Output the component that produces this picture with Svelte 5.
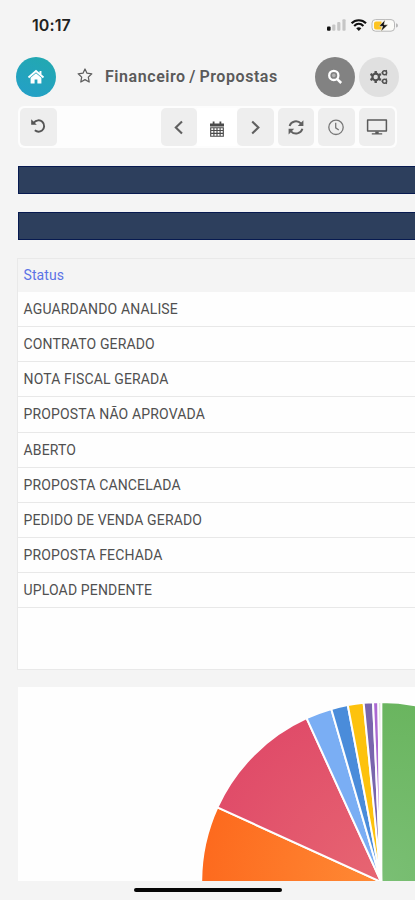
<script lang="ts">
  const statuses = [
    "AGUARDANDO ANALISE",
    "CONTRATO GERADO",
    "NOTA FISCAL GERADA",
    "PROPOSTA NÃO APROVADA",
    "ABERTO",
    "PROPOSTA CANCELADA",
    "PEDIDO DE VENDA GERADO",
    "PROPOSTA FECHADA",
    "UPLOAD PENDENTE",
  ];

  // angles in degrees, clockwise from the top of the pie
  const slices = [
    { from: 0, to: 120, fill: "url(#green)" },
    { from: -120, to: -65.5, fill: "url(#orange)" },
    { from: -65.5, to: -24.5, fill: "url(#red)" },
    { from: -24.5, to: -16.1, fill: "#7aaef4" },
    { from: -16.1, to: -10.7, fill: "#4a8cda" },
    { from: -10.7, to: -5.6, fill: "#fdc20d" },
    { from: -5.6, to: -2.6, fill: "#7965ad" },
    { from: -2.6, to: -0.9, fill: "#ab68d2" },
    { from: -0.9, to: 0, fill: "#cbd3c6" },
  ];

  const cx = 363.2;
  const cy = 195;
  const radius = 180;

  function point(angle: number) {
    const rad = (angle * Math.PI) / 180;
    return `${cx + radius * Math.sin(rad)} ${cy - radius * Math.cos(rad)}`;
  }

  function slicePath(from: number, to: number) {
    return `M${cx} ${cy} L${point(from)} A${radius} ${radius} 0 0 1 ${point(to)} Z`;
  }
</script>

<div class="screen">
  <div class="status-bar">
    <span class="time">10:17</span>
    <svg class="signals" width="72" height="16" viewBox="0 0 72 16">
      <rect x="1" y="9.5" width="3.6" height="4.2" rx="1" fill="#111" />
      <g fill="#c6c6c6">
        <rect x="6.2" y="7.4" width="3.2" height="6.3" rx="1" />
        <rect x="11.2" y="5" width="3.2" height="8.7" rx="1" />
        <rect x="16.4" y="2.2" width="3.2" height="11.5" rx="1" />
      </g>
      <g fill="none" stroke="#111" stroke-width="2.1">
        <path d="M25.6 6.3C29.4 2.2 36.2 2.2 40 6.3" />
        <path d="M28.2 9C31 6.2 34.6 6.2 37.4 9" />
      </g>
      <path d="M30.2 11.3q2.6-2 5.2 0L32.8 14z" fill="#111" />
      <rect x="46" y="2.6" width="22.5" height="11.6" rx="3.5" fill="#fbfbf8" stroke="#b7b7b7" />
      <path d="M50 4.4h5.5v8H50a2 2 0 0 1-2-2v-4a2 2 0 0 1 2-2z" fill="#fdc421" />
      <path d="M70 6.2q2 .5 2 2.2t-2 2.2z" fill="#b7b7b7" />
      <path d="M59.2 2.8 53 9.3h3.7l-1.8 5.2L62 7.8h-4z" fill="#111" stroke="#fff8e0" stroke-width=".5" />
    </svg>
  </div>

  <header>
    <button class="round home" aria-label="Home">
      <svg width="18" height="16" viewBox="0 0 18 16">
        <path d="M1.5 8.5 9 2l7.5 6.5M13.5 2v3.5" fill="none" stroke="#fff" stroke-width="1.9" />
        <path d="M3.6 8.8 9 4.3l5.4 4.5v5.7h-4v-4H7.6v4h-4z" fill="#fff" />
      </svg>
    </button>
    <svg class="star" width="16" height="16" viewBox="0 0 16 16">
      <path d="m8 1 2 4.2 4.8.6-3.5 3.3.9 4.9L8 11.6 3.8 14l.9-4.9-3.5-3.3L6 5.2z" fill="none" stroke="#5d5d5d" stroke-width="1.25" stroke-linejoin="round" />
    </svg>
    <h1>Financeiro / Propostas</h1>
    <button class="round search" aria-label="Buscar">
      <svg width="16" height="16" viewBox="0 0 16 16">
        <circle cx="6.8" cy="6.4" r="4.6" fill="none" stroke="#fff" stroke-width="2.3" />
        <circle cx="6.8" cy="6.4" r="1.8" fill="#b4b4b4" />
        <path d="m10 9.8 4.2 4.2" stroke="#fff" stroke-width="2.5" />
      </svg>
    </button>
    <button class="round settings" aria-label="Configurações">
      <svg width="20" height="16" viewBox="0 0 20 16">
        <g fill="none" stroke="#505050">
          <circle cx="6.7" cy="8" r="3.3" stroke-width="2.2" />
          <path d="M6.7 4.2V2M6.7 11.8V14M10 6.1 11.9 5M3.4 9.9 1.5 11M10 9.9l1.9 1.1M3.4 6.1 1.5 5" stroke-width="2.4" />
          <circle cx="15.6" cy="3.8" r="2" stroke-width="1.5" />
          <circle cx="15.6" cy="12.2" r="2" stroke-width="1.5" />
          <path d="M12.4 3.8H14M12.4 12.2H14M16.9 2.2l.8-1M16.9 5.4l.8 1M16.9 10.6l.8-1M16.9 13.8l.8 1" stroke-width="1.2" />
        </g>
      </svg>
    </button>
  </header>

  <div class="toolbar">
    <button class="tool undo" aria-label="Desfazer">
      <svg width="18" height="18" viewBox="0 0 18 18">
        <path d="M4.6 5.8C7.2 2.8 11 2.6 13.3 4.8 16 7.4 15.6 11.4 13 13.4 10.8 15 8 14.9 5.8 13.3" fill="none" stroke="#555" stroke-width="1.9" />
        <path d="M2.2 2.2v5.6h5.6z" fill="#555" />
      </svg>
    </button>
    <div class="period">
      <button class="tool" aria-label="Anterior">
        <svg width="16" height="18" viewBox="0 0 16 18"><path d="m11 3.5-6.2 6 6.2 6" fill="none" stroke="#606060" stroke-width="2.1" /></svg>
      </button>
      <button class="tool calendar" aria-label="Calendário">
        <svg width="16" height="18" viewBox="0 0 16 18">
          <path d="M1 3.6h14v3H1zM3.7 1.5h1.8v3H3.7zM10.5 1.5h1.8v3h-1.8z" fill="#4b4b4b" />
          <path d="M1.7 7.7h12.6v8.5H1.7zM1.7 10.5h12.6M1.7 13.4h12.6M4.9 7.7v8.5M8 7.7v8.5M11.1 7.7v8.5" fill="none" stroke="#4b4b4b" stroke-width="1.15" />
        </svg>
      </button>
      <button class="tool" aria-label="Próximo">
        <svg width="16" height="18" viewBox="0 0 16 18"><path d="m5.2 3.5 6.2 6-6.2 6" fill="none" stroke="#606060" stroke-width="2.1" /></svg>
      </button>
    </div>
    <button class="tool" aria-label="Atualizar">
      <svg width="18" height="18" viewBox="0 0 18 18">
        <path d="M2.6 8C4 3 10.5 1.7 14 5.5M15.4 10.8C14 15.8 7.5 17.1 4 13.3" fill="none" stroke="#606060" stroke-width="1.9" />
        <path d="M16.4 2.2V8h-5.6zM1.6 16.6v-5.8h5.6z" fill="#606060" />
      </svg>
    </button>
    <button class="tool" aria-label="Histórico">
      <svg width="18" height="18" viewBox="0 0 18 18" fill="none" stroke="#777">
        <circle cx="9" cy="9.3" r="7.2" stroke-width="1.3" />
        <path d="M8.7 4.8v5l3.1 2.2" stroke-width="1.3" />
      </svg>
    </button>
    <button class="tool" aria-label="Tela cheia">
      <svg width="22" height="18" viewBox="0 0 22 18">
        <path d="M1.6 2h18.8v11H1.6z" fill="none" stroke="#5a5a5a" stroke-width="1.5" stroke-linejoin="round" />
        <path d="M9.3 13.5h3.4v1.8h3.5v1.2H5.8v-1.2h3.5z" fill="#5a5a5a" />
      </svg>
    </button>
  </div>

  <div class="banner"></div>
  <div class="banner"></div>

  <section class="list">
    <div class="list-head">Status</div>
    {#each statuses as status}
      <div class="row">{status}</div>
    {/each}
  </section>

  <section class="chart">
    <svg width="397" height="194" viewBox="0 0 397 194">
      <defs>
        <radialGradient id="green" gradientUnits="userSpaceOnUse" {cx} {cy} r={radius}>
          <stop offset="0" stop-color="#7abf74" />
          <stop offset="1" stop-color="#6ab55f" />
        </radialGradient>
        <radialGradient id="orange" gradientUnits="userSpaceOnUse" {cx} {cy} r={radius}>
          <stop offset="0" stop-color="#ff8a35" />
          <stop offset="1" stop-color="#fd6a1e" />
        </radialGradient>
        <radialGradient id="red" gradientUnits="userSpaceOnUse" {cx} {cy} r={radius}>
          <stop offset="0" stop-color="#e76672" />
          <stop offset="1" stop-color="#e04c69" />
        </radialGradient>
      </defs>
      {#each slices as slice}
        <path class="slice" d={slicePath(slice.from, slice.to)} fill={slice.fill} />
      {/each}
    </svg>
  </section>

  <div class="home-indicator"></div>
</div>

<style>
  :global(body) {
    margin: 0;
    background: #f4f4f4;
  }

  .screen {
    box-sizing: border-box;
    width: 415px;
    height: 900px;
    overflow: hidden;
    display: flex;
    flex-direction: column;
    background: #f4f4f4;
    font-family: Roboto, "Liberation Sans", sans-serif;
  }

  .status-bar {
    height: 56px;
    flex: none;
    box-sizing: border-box;
    padding: 16px 17px 0 32px;
    display: flex;
    justify-content: space-between;
    align-items: flex-start;
  }

  .time {
    font-family: Inter, sans-serif;
    font-size: 16px;
    line-height: 18px;
    font-weight: 600;
    letter-spacing: 0.1px;
    color: #222;
  }

  .signals {
    margin-top: 1px;
  }

  header {
    height: 41px;
    flex: none;
    display: flex;
    align-items: center;
    padding: 0 16px;
  }

  button {
    border: none;
    padding: 0;
    display: flex;
    align-items: center;
    justify-content: center;
    flex: none;
  }

  .round {
    width: 40px;
    height: 40px;
    border-radius: 50%;
  }

  .home {
    background: linear-gradient(25deg, #249fc9, #22a9ae);
  }

  .star {
    margin: 0 12.5px 2px 20.5px;
  }

  h1 {
    flex: 1;
    margin: 0;
    font-size: 16px;
    line-height: 19px;
    font-weight: 600;
    letter-spacing: 0.56px;
    word-spacing: -1px;
    color: #5a5a5a;
    white-space: nowrap;
  }

  .search {
    background: #828282;
    margin-right: 4px;
  }

  .settings {
    background: #e0e0e0;
  }

  .toolbar {
    box-sizing: border-box;
    width: 379px;
    height: 42px;
    flex: none;
    margin: 9px 0 18px 18px;
    padding: 2px;
    display: flex;
    gap: 4px;
    border-radius: 6px;
    background: #fdfdfd;
  }

  .tool {
    box-sizing: border-box;
    width: 36.5px;
    height: 38px;
    border-radius: 5px;
    background: #eee;
  }

  .undo {
    padding-bottom: 3px;
  }

  .period {
    display: flex;
    margin-left: auto;
  }

  .calendar {
    width: 40px;
    padding-top: 4px;
    border-radius: 0;
    background: #fff;
  }

  .banner {
    box-sizing: border-box;
    width: 420px;
    height: 28px;
    flex: none;
    margin: 0 0 18px 18px;
    border: 1px solid #071a50;
    background: #2d3f5d;
  }

  .list {
    box-sizing: border-box;
    width: 420px;
    height: 412px;
    flex: none;
    margin: 0 0 17px 17px;
    border: 1px solid #e9e9e9;
    background: #fefefe;
    font-size: 14px;
  }

  .list-head {
    height: 33px;
    padding-left: 5.5px;
    line-height: 33px;
    background: #f4f4f4;
    color: #5b72e6;
    letter-spacing: 0.1px;
  }

  .row {
    box-sizing: border-box;
    height: 35.15px;
    padding-left: 5.5px;
    border-bottom: 1px solid #e8e8e8;
    line-height: 34px;
    letter-spacing: 0.15px;
    color: #505050;
  }

  .chart {
    width: 397px;
    height: 194px;
    flex: none;
    margin-left: 18px;
    background: #fefefe;
  }

  .chart svg {
    display: block;
  }

  .slice {
    stroke: #fefefe;
    stroke-width: 2;
    stroke-linejoin: round;
  }

  .home-indicator {
    width: 148px;
    height: 4px;
    flex: none;
    margin: 7px 0 0 134px;
    border-radius: 2px;
    background: #050505;
  }
</style>
